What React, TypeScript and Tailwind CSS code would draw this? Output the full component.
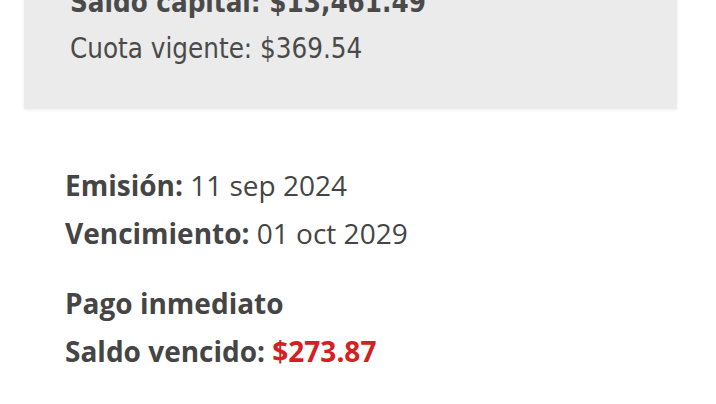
export default function App() {
  return (
    <div className="w-[716px] h-[404px] bg-white overflow-hidden">
      {/* Resumen del crédito */}
      <div className="ml-[24px] w-[653px] -mt-[37px] pt-4 pb-[38px] pl-[46px] bg-[#ebebeb] shadow-[0_1px_3px_rgba(0,0,0,0.08)] text-[#4a4a4a] font-['DejaVu_Sans',sans-serif] [font-stretch:condensed] text-[27.5px]">
        <div className="h-[46px] leading-[46px] font-bold">Saldo capital: $13,461.49</div>
        <div className="h-[46px] leading-[46px]">Cuota vigente: $369.54</div>
      </div>

      {/* Fechas */}
      <div className="mt-[52px] pl-[65px] text-[28px] text-[#454545] font-['Open_Sans',sans-serif]">
        <div className="h-[48px] leading-[48px]">
          <span className="font-bold">Emisión:</span> 11 sep 2024
        </div>
        <div className="h-[48px] leading-[48px]">
          <span className="font-bold">Vencimiento:</span> 01 oct 2029
        </div>
        <div className="mt-[22px] h-[48px] leading-[48px] font-bold">Pago inmediato</div>
        <div className="h-[48px] leading-[48px] font-bold">
          Saldo vencido: <span className="text-[#d42020]">$273.87</span>
        </div>
      </div>
    </div>
  )
}
